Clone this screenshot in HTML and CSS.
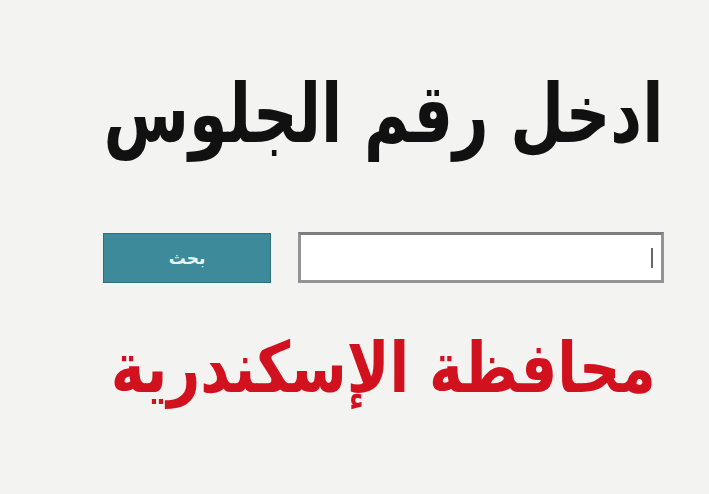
FILE: index.html
```html
<!DOCTYPE html>
<html lang="ar" dir="rtl">
<head>
<meta charset="utf-8">
<link rel="stylesheet" href="styles.css">
</head>
<body>
<main class="page">
  <h1 class="title"><span class="squeeze title-text">ادخل رقم الجلوس</span></h1>
  <div class="form-row">
    <div class="field"><span class="caret"></span></div>
    <button class="btn">بحث</button>
  </div>
  <h2 class="gov"><span class="squeeze gov-text">محافظة الإسكندرية</span></h2>
</main>
</body>
</html>
```
FILE: styles.css
```css
html, body {
  margin: 0;
  padding: 0;
  width: 709px;
  height: 494px;
  overflow: hidden;
  background: #f3f3f2;
}
.page {
  box-sizing: border-box;
  width: 709px;
  height: 494px;
  display: flex;
  flex-direction: column;
  align-items: center;
  padding-top: 64px;
  padding-left: 58px;
  font-family: "DejaVu Sans", sans-serif;
}
.title, .gov {
  margin: 0;
  white-space: nowrap;
  text-align: center;
  display: flex;
  justify-content: center;
  width: 600px;
}
.squeeze {
  display: inline-block;
  flex: none;
}
.title {
  font-size: 82px;
  font-weight: bold;
  color: #111;
  line-height: 100px;
  height: 100px;
}
.title-text {
  transform: scaleX(0.756);
}
.form-row {
  box-sizing: border-box;
  margin-top: 68px;
  display: flex;
  gap: 27px;
  align-items: center;
  width: 561px;
}
.field {
  box-sizing: border-box;
  width: 366px;
  height: 51px;
  background: #fff;
  border: 3px solid #939393;
  border-top-color: #7d7d7d;
  display: flex;
  align-items: center;
  padding-right: 8px;
}
.caret {
  width: 2px;
  height: 20px;
  background: #666;
}
.btn {
  box-sizing: border-box;
  width: 168px;
  height: 50px;
  background: #3d8a9a;
  border: 1px solid #2f6f7c;
  color: #e3f6f2;
  font-family: "DejaVu Sans", sans-serif;
  font-size: 17px;
  font-weight: bold;
  padding: 0;
}
.gov {
  margin-top: 40px;
  font-size: 70px;
  font-weight: bold;
  color: #d2111f;
  line-height: 90px;
  height: 90px;
}
.gov-text {
  transform: scaleX(0.82);
}
```
